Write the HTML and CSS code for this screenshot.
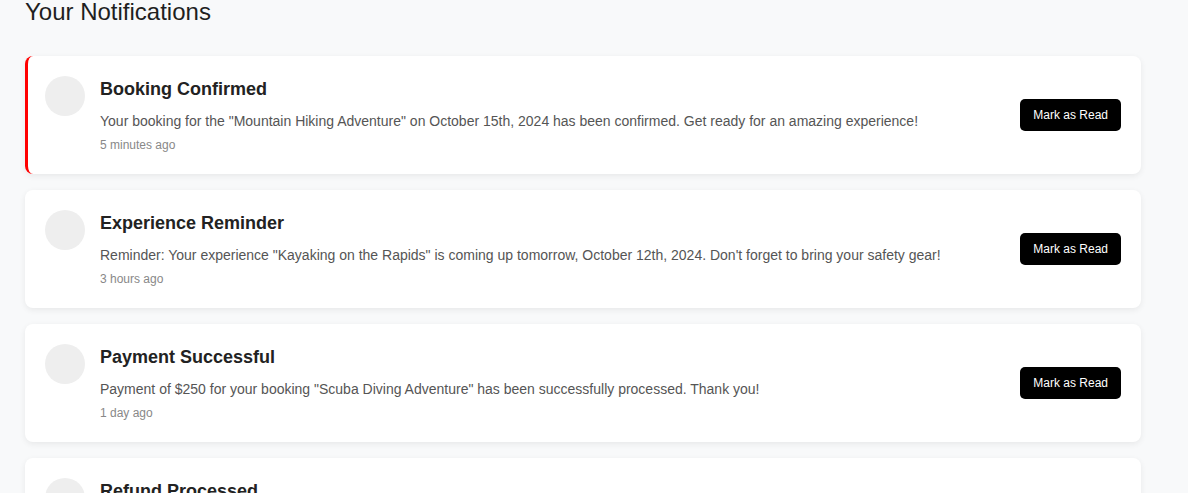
FILE: index.html
```html
<!DOCTYPE html>
<html lang="en">
<head>
<meta charset="utf-8">
<title>Your Notifications</title>
<link rel="stylesheet" href="styles.css">
</head>
<body>
<main class="page">
  <h1 class="page-title">Your Notifications</h1>
  <ul class="list">
    <li class="card unread">
      <div class="avatar"></div>
      <div class="body">
        <h3 class="title">Booking Confirmed</h3>
        <p class="msg">Your booking for the "Mountain Hiking Adventure" on October 15th, 2024 has been confirmed. Get ready for an amazing experience!</p>
        <span class="time">5 minutes ago</span>
      </div>
      <button class="btn">Mark as Read</button>
    </li>
    <li class="card">
      <div class="avatar"></div>
      <div class="body">
        <h3 class="title">Experience Reminder</h3>
        <p class="msg">Reminder: Your experience "Kayaking on the Rapids" is coming up tomorrow, October 12th, 2024. Don't forget to bring your safety gear!</p>
        <span class="time">3 hours ago</span>
      </div>
      <button class="btn">Mark as Read</button>
    </li>
    <li class="card">
      <div class="avatar"></div>
      <div class="body">
        <h3 class="title">Payment Successful</h3>
        <p class="msg">Payment of $250 for your booking "Scuba Diving Adventure" has been successfully processed. Thank you!</p>
        <span class="time">1 day ago</span>
      </div>
      <button class="btn">Mark as Read</button>
    </li>
    <li class="card">
      <div class="avatar"></div>
      <div class="body">
        <h3 class="title">Refund Processed</h3>
        <p class="msg">Your refund has been processed successfully.</p>
        <span class="time">2 days ago</span>
      </div>
      <button class="btn">Mark as Read</button>
    </li>
  </ul>
</main>
</body>
</html>
```

FILE: styles.css
```css
html, body {
  margin: 0;
  padding: 0;
  background: #f8f9fa;
  font-family: "Liberation Sans", Arial, sans-serif;
}

.page {
  padding: 0 47px 20px 25px;
}

.page-title {
  margin: 0 0 32px;
  font-size: 24px;
  line-height: 24px;
  font-weight: 400;
  color: #1f1f1f;
}

.list {
  list-style: none;
  margin: 0;
  padding: 0;
  display: flex;
  flex-direction: column;
  gap: 16px;
}

.card {
  display: flex;
  align-items: center;
  gap: 15px;
  background: #fff;
  border-radius: 8px;
  border-left: 3px solid transparent;
  padding: 20px 20px 20px 17px;
  box-shadow: 0 2px 6px rgba(0, 0, 0, 0.07);
}

.card.unread {
  border-left-color: #ff0000;
}

.avatar {
  flex: 0 0 40px;
  width: 40px;
  height: 40px;
  border-radius: 50%;
  background: #eeeeee;
  align-self: flex-start;
}

.body {
  flex: 1;
  display: flex;
  flex-direction: column;
}

.title {
  margin: 0 0 8px;
  font-size: 18px;
  line-height: 27px;
  font-weight: 700;
  color: #222;
}

.msg {
  margin: 0 0 5px;
  font-size: 14px;
  line-height: 21px;
  color: #555;
}

.time {
  font-size: 12px;
  line-height: 17px;
  color: #888;
}

.btn {
  flex: 0 0 auto;
  background: #000;
  color: #fff;
  border: none;
  border-radius: 5px;
  height: 32px;
  padding: 0 13px;
  font-family: "Liberation Sans", Arial, sans-serif;
  font-size: 12px;
  cursor: pointer;
}
```
